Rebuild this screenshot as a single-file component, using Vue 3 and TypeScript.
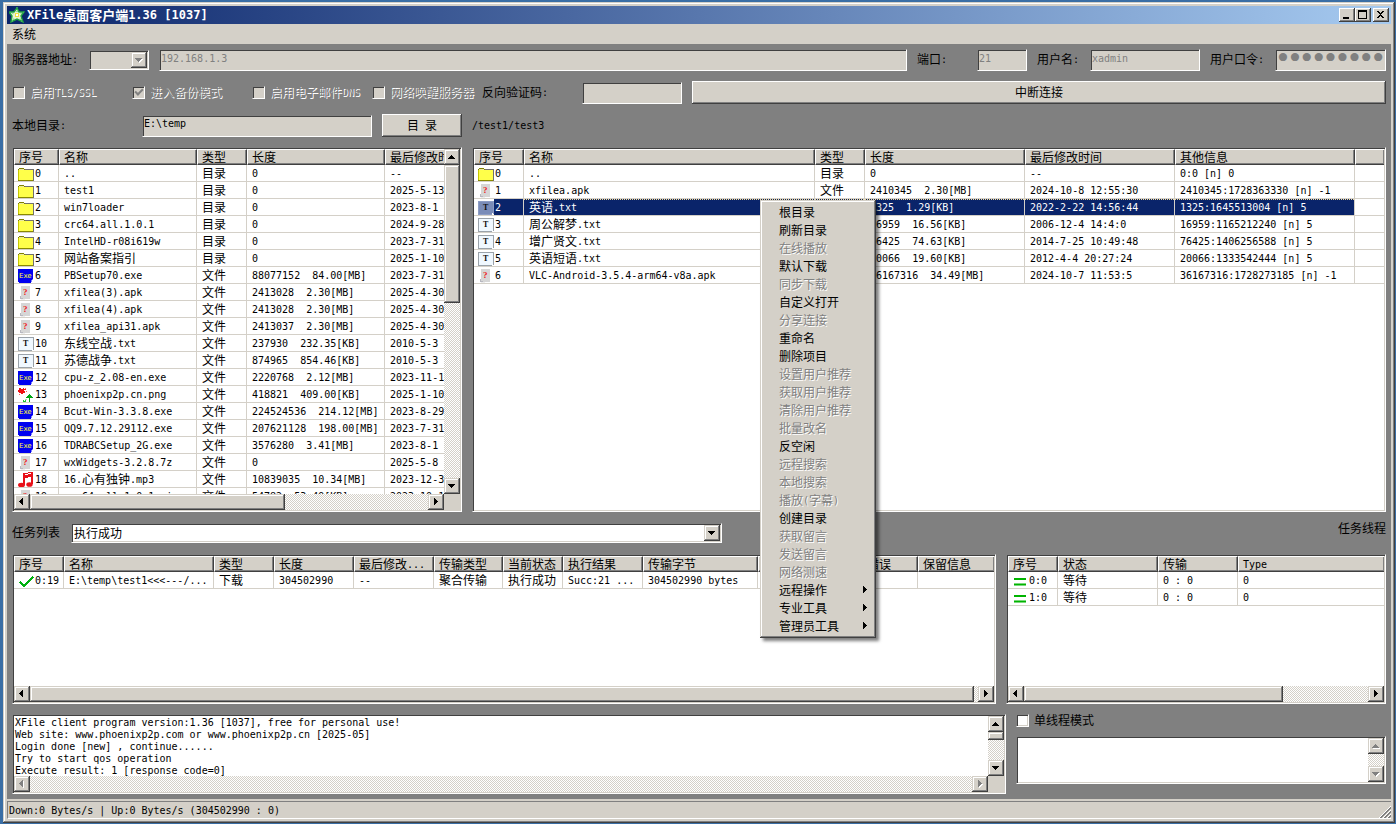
<script setup lang="ts">
import { h, ref, type FunctionalComponent } from 'vue'

type IconKind = 'folder' | 'exe' | 'unknown' | 'text' | 'image' | 'music' | 'check' | 'idle'
interface Column { title: string; width: number }
interface Row { icon: IconKind; cells: string[]; selected?: boolean }
interface MenuEntry { label: string; disabled?: boolean; submenu?: boolean }

/* Half-width and full-width characters take a face each, on one 6px/12px grid. */
const T: FunctionalComponent<{ v: string }> = (props) =>
  h('span', { class: 'txt' }, (props.v.match(/[\u2e80-\uffef]+|[^\u2e80-\uffef]+/g) ?? []).map((run) =>
    /[\u2e80-\uffef]/.test(run) ? h('span', run) : h('span', { class: 'half' }, run)))
T.props = ['v']

const arrows: Record<string, string> = {
  up: 'M7 6h1v1h1v1h1v1h1v1H4V9h1V8h1V7h1z',
  down: 'M4 6h7v1h-1v1H9v1H8v1H7V9H6V8H5V7H4z',
  left: 'M8 4h1v7H8v-1H7V9H6V8H5V7h1V6h1V5h1z',
  right: 'M6 4h1v1h1v1h1v1h1v1H9v1H8v1H7v1H6z',
}
const Arrow: FunctionalComponent<{ dir: string; off?: boolean }> = (props) =>
  h('svg', { class: 'arrow', viewBox: '0 0 16 16', width: 16, height: 16, 'aria-hidden': 'true' }, [
    props.off ? h('path', { d: arrows[props.dir], fill: '#fff', transform: 'translate(1 1)' }) : null,
    h('path', { d: arrows[props.dir], fill: props.off ? '#808080' : '#000' }),
  ])
Arrow.props = { dir: String, off: Boolean } as any

const ScrollBar: FunctionalComponent<{ vertical?: boolean; thumb?: number; rest?: number; off?: boolean }> = (props) =>
  h('div', { class: ['sbar', props.vertical ? 'v' : 'h'] }, [
    h('button', { type: 'button', class: 'sbtn', disabled: props.off, 'aria-label': props.vertical ? '向上' : '向左' },
      h(Arrow, { dir: props.vertical ? 'up' : 'left', off: props.off })),
    h('div', { class: 'track' }, props.thumb ? [
      h('div', { class: 'thumb', style: { flexGrow: props.thumb } }),
      h('div', { style: { flexGrow: props.rest } }),
    ] : []),
    h('button', { type: 'button', class: 'sbtn', disabled: props.off, 'aria-label': props.vertical ? '向下' : '向右' },
      h(Arrow, { dir: props.vertical ? 'down' : 'right', off: props.off })),
  ])
ScrollBar.props = { vertical: Boolean, thumb: Number, rest: Number, off: Boolean }

const px = (d: string, fill: string) => h('path', { d, fill })
const Icon: FunctionalComponent<{ kind: IconKind; on?: boolean }> = (props) => {
  const parts = {
    folder: [
      px('M1 1h5v1h1v1h8v11H0V2h1z', '#808000'), px('M1 3h14v10H1z', '#ffff4a'), px('M1 2h5v1H1z', '#e8e8a0'),
      px('M0 3h1v10H0z', '#c8c800'), px('M7 2h9v1H7zM15 3h1v11h-1z', '#707070'), px('M1 13h14v1H1z', '#8a8a00'),
    ],
    exe: [
      px('M0 0h15v10h-1v2h-1v2H1v-1H0z', '#0000f0'), px('M14 10h1v1h-1v2h-1v-2h1z', '#8080ff'),
      h('text', { x: 1, y: 9, 'font-size': 7, 'font-family': 'DejaVu Sans, sans-serif', fill: '#ffff30' }, 'Exe'),
    ],
    unknown: [
      px('M3 0h9v13H5v-1H3z', '#d6d6d6'), px('M2 10h1v2h2v1H2z', '#b8b8c0'), px('M3 13h4v1H3z', '#eee'),
      h('text', { x: 5, y: 9, 'font-size': 9, 'font-weight': 700, 'font-family': 'Liberation Serif, serif', fill: '#f02020' }, '?'),
    ],
    text: [
      px('M0 0h16v13h-2v1H0z', props.on ? '#8c9cc4' : '#9aa2aa'), px('M1 1h14v11h-1v1H1z', props.on ? '#7a8cb8' : '#f0f8ff'),
      px('M14 12h1v1h-1z', '#fff'),
      h('text', { x: 5, y: 9, 'font-size': 8, 'font-weight': 700, 'font-family': 'Liberation Serif, serif', fill: '#111' }, 'T'),
    ],
    image: [
      px('M1 0h2v1h2V0h1v1h2v1H6v1h1v2H5v1H3V5H1V4H0V2h1z', '#f01010'), px('M7 0h1v1H7zM8 3h1v1H8zM1 6h1v1H1z', '#ff6060'),
      px('M11 6h1v1h1v1h1v1h1v1h-3v6h-1v-6H8V9h1V8h1V7h1z', '#00a414'),
      px('M5 12h1v1h1v-1h1v2H7v1H3v-1h2z', '#20c030'), px('M7 11h2v1H7z', '#b0e0b0'),
    ],
    music: [
      px('M5 0l10-1v12h-2V4L7 5v7H5z', '#e81018'), px('M7 1l6-1v1L7 2z', '#fff'),
      h('ellipse', { cx: 3.5, cy: 12, rx: 3.5, ry: 2.3, fill: '#e81018' }),
      h('ellipse', { cx: 11.5, cy: 11.5, rx: 3.2, ry: 2.3, fill: '#e81018' }),
    ],
    check: [h('path', { d: 'M2 8l4 4 9-9', fill: 'none', stroke: '#00b010', 'stroke-width': 2 })],
    idle: [px('M2 4h12v2H2zM2 10h12v1H2z', '#00b400'), px('M2 9h12v1H2zM2 11h12v1H2z', '#7ad87a')],
  }[props.kind]
  return h('svg', { class: 'ico', viewBox: '0 -2 16 16', width: 16, height: 16, 'aria-hidden': 'true' }, parts)
}
Icon.props = { kind: String, on: Boolean } as any

const ListView: FunctionalComponent<{ cols: Column[]; rows: Row[]; fill?: boolean; label: string }> = (props) =>
  h('div', { class: 'view' }, h('table', {
    class: 'list', 'aria-label': props.label,
    style: { width: props.fill ? '100%' : props.cols.reduce((s, c) => s + c.width, 0) + 'px' },
  }, [
    h('colgroup', [...props.cols.map((c) => h('col', { style: { width: c.width ? c.width + 'px' : 'auto' } }))]),
    h('thead', h('tr', props.cols.map((c) => h('th', { scope: 'col' }, h(T, { v: c.title }))))),
    h('tbody', props.rows.map((r) => h('tr', { class: { sel: r.selected } }, props.cols.map((_, i) =>
      h('td', { class: { first: i === 0 } }, i === 0
        ? h('div', { class: 'lead' }, [h(Icon, { kind: r.icon, on: r.selected }), h(T, { v: r.cells[0] })])
        : h(T, { v: r.cells[i] ?? '' })))))),
  ]))
ListView.props = { cols: Array, rows: Array, fill: Boolean, label: String } as any

const row = (icon: IconKind, ...cells: string[]): Row => ({ icon, cells })

const localCols: Column[] = [
  { title: '序号', width: 45 }, { title: '名称', width: 138 }, { title: '类型', width: 50 },
  { title: '长度', width: 138 }, { title: '最后修改时间', width: 150 },
]
const localRows: Row[] = [
  row('folder', '0', '..', '目录', '0', '--'),
  row('folder', '1', 'test1', '目录', '0', '2025-5-13'),
  row('folder', '2', 'win7loader', '目录', '0', '2023-8-1'),
  row('folder', '3', 'crc64.all.1.0.1', '目录', '0', '2024-9-28'),
  row('folder', '4', 'IntelHD-r08i619w', '目录', '0', '2023-7-31'),
  row('folder', '5', '网站备案指引', '目录', '0', '2025-1-10'),
  row('exe', '6', 'PBSetup70.exe', '文件', '88077152  84.00[MB]', '2023-7-31'),
  row('unknown', '7', 'xfilea(3).apk', '文件', '2413028  2.30[MB]', '2025-4-30'),
  row('unknown', '8', 'xfilea(4).apk', '文件', '2413028  2.30[MB]', '2025-4-30'),
  row('unknown', '9', 'xfilea_api31.apk', '文件', '2413037  2.30[MB]', '2025-4-30'),
  row('text', '10', '东线空战.txt', '文件', '237930  232.35[KB]', '2010-5-3'),
  row('text', '11', '苏德战争.txt', '文件', '874965  854.46[KB]', '2010-5-3'),
  row('exe', '12', 'cpu-z_2.08-en.exe', '文件', '2220768  2.12[MB]', '2023-11-1'),
  row('image', '13', 'phoenixp2p.cn.png', '文件', '418821  409.00[KB]', '2025-1-10'),
  row('exe', '14', 'Bcut-Win-3.3.8.exe', '文件', '224524536  214.12[MB]', '2023-8-29'),
  row('exe', '15', 'QQ9.7.12.29112.exe', '文件', '207621128  198.00[MB]', '2023-7-31'),
  row('exe', '16', 'TDRABCSetup_2G.exe', '文件', '3576280  3.41[MB]', '2023-8-1'),
  row('unknown', '17', 'wxWidgets-3.2.8.7z', '文件', '0', '2025-5-8'),
  row('music', '18', '16.心有独钟.mp3', '文件', '10839035  10.34[MB]', '2023-12-3'),
  row('unknown', '19', 'crc64.all.1.0.1.zip', '文件', '54782  53.49[KB]', '2023-10-1'),
]

const remoteCols: Column[] = [
  { title: '序号', width: 50 }, { title: '名称', width: 291 }, { title: '类型', width: 50 }, { title: '长度', width: 160 },
  { title: '最后修改时间', width: 150 }, { title: '其他信息', width: 180 }, { title: '', width: 0 },
]
const remoteRows: Row[] = [
  row('folder', '0', '..', '目录', '0', '--', '0:0 [n] 0'),
  row('unknown', '1', 'xfilea.apk', '文件', '2410345  2.30[MB]', '2024-10-8 12:55:30', '2410345:1728363330 [n] -1'),
  { ...row('text', '2', '英语.txt', '文件', '1325  1.29[KB]', '2022-2-22 14:56:44', '1325:1645513004 [n] 5'), selected: true },
  row('text', '3', '周公解梦.txt', '文件', '16959  16.56[KB]', '2006-12-4 14:4:0', '16959:1165212240 [n] 5'),
  row('text', '4', '增广贤文.txt', '文件', '76425  74.63[KB]', '2014-7-25 10:49:48', '76425:1406256588 [n] 5'),
  row('text', '5', '英语短语.txt', '文件', '20066  19.60[KB]', '2012-4-4 20:27:24', '20066:1333542444 [n] 5'),
  row('unknown', '6', 'VLC-Android-3.5.4-arm64-v8a.apk', '文件', '36167316  34.49[MB]', '2024-10-7 11:53:5', '36167316:1728273185 [n] -1'),
]

const taskCols: Column[] = [
  { title: '序号', width: 50 }, { title: '名称', width: 150 }, { title: '类型', width: 60 }, { title: '长度', width: 80 },
  { title: '最后修改...', width: 80 }, { title: '传输类型', width: 69 }, { title: '当前状态', width: 60 },
  { title: '执行结果', width: 80 }, { title: '传输字节', width: 115 }, { title: '', width: 80 },
  { title: '传输错误', width: 80 }, { title: '保留信息', width: 0 },
]
const taskRows: Row[] = [
  row('check', '0:19', 'E:\\temp\\test1<<<---/...', '下载', '304502990', '--', '聚合传输', '执行成功', 'Succ:21 ...', '304502990 bytes'),
]

const threadCols: Column[] = [
  { title: '序号', width: 50 }, { title: '状态', width: 100 }, { title: '传输', width: 80 }, { title: 'Type', width: 0 },
]
const threadRows: Row[] = [row('idle', '0:0', '等待', '0 : 0', '0'), row('idle', '1:0', '等待', '0 : 0', '0')]

const on = (label: string): MenuEntry => ({ label })
const off = (label: string): MenuEntry => ({ label, disabled: true })
const sub = (label: string): MenuEntry => ({ label, submenu: true })
const menu: MenuEntry[] = [
  on('根目录'), on('刷新目录'), off('在线播放'), on('默认下载'), off('同步下载'), on('自定义打开'), off('分享连接'),
  on('重命名'), on('删除项目'), off('设置用户推荐'), off('获取用户推荐'), off('清除用户推荐'), off('批量改名'),
  on('反空闲'), off('远程搜索'), off('本地搜索'), off('播放(字幕)'), on('创建目录'), off('获取留言'), off('发送留言'),
  off('网络测速'), sub('远程操作'), sub('专业工具'), sub('管理员工具'),
]

const options = [
  { id: 'tls', label: '启用TLS/SSL', checked: false },
  { id: 'backup', label: '进入备份模式', checked: true },
  { id: 'dns', label: '启用电子邮件DNS', checked: false },
  { id: 'wake', label: '网络唤醒服务器', checked: false },
]

const log = [
  'XFile client program version:1.36 [1037], free for personal use!',
  'Web site: www.phoenixp2p.com or www.phoenixp2p.cn [2025-05]',
  'Login done [new] , continue......',
  'Try to start qos operation',
  'Execute result: 1 [response code=0]',
].join('\n')
const localDir = ref('E:\\temp')
const single = ref(false)
</script>

<template>
  <div class="desktop">
    <div class="window">
      <header class="title">
        <svg class="logo" viewBox="0 0 16 16" width="16" height="16" aria-hidden="true">
          <path d="M8 1l2 4 5 0-3 4 2 6-6-3-6 3 1-6-3-4 5 0z" fill="#e8f4d0" stroke="#1fa040" stroke-width="1.4" />
          <path d="M8 0v5M15 5l-4 2M13 15l-2-4M3 15l2-4M1 5l4 2" stroke="#48c068" stroke-width="1" stroke-dasharray="1 1" />
          <path d="M6 6h4v4H6z" fill="#f0e040" /><path d="M7 7h2v2H7z" fill="#fff" />
        </svg>
        <h1><T v="XFile桌面客户端1.36 [1037]" /></h1>
        <div class="caption-buttons">
          <button type="button" class="cap" aria-label="最小化"><svg viewBox="0 0 16 14" width="16" height="14"><path d="M4 9h6v2H4z" /></svg></button>
          <button type="button" class="cap" aria-label="最大化"><svg viewBox="0 0 16 14" width="16" height="14"><path d="M3 2h9v9H3zM4 4v6h7V4z" fill-rule="evenodd" /></svg></button>
          <button type="button" class="cap close" aria-label="关闭"><svg viewBox="0 0 16 14" width="16" height="14"><path d="M4 3h2v1h1v1h1V4h1V3h2v1h-1v1H9v1H8v1h1v1h1v1h1v1H9V9H8V8H7v1H6v1H4V9h1V8h1V7h1V6H6V5H5V4H4z" /></svg></button>
        </div>
      </header>
      <nav class="menubar"><button type="button">系统</button></nav>

      <main class="body">
        <div class="line">
          <div class="field"><label for="proto" class="w77"><T v="服务器地址:" /></label>
            <div class="combo proto"><select id="proto" disabled><option></option></select><span class="drop"><Arrow dir="down" off /></span></div>
          </div>
          <input class="box grow" aria-label="服务器地址" value="192.168.1.3" disabled>
          <div class="field"><label for="port" class="w60"><T v="端口:" /></label><input id="port" class="box w50" value="21" disabled></div>
          <div class="field"><label for="user" class="w53"><T v="用户名:" /></label><input id="user" class="box w110" value="xadmin" disabled></div>
          <div class="field"><label for="pass" class="w65"><T v="用户口令:" /></label><input id="pass" class="box w111 pass" type="password" value="0000000000" disabled></div>
        </div>

        <div class="line second">
          <div class="options">
            <div v-for="o in options" :key="o.id" class="option">
              <input :id="o.id" type="checkbox" :checked="o.checked" disabled><label :for="o.id"><T :v="o.label" /></label>
            </div>
          </div>
          <div class="field"><label for="code" class="w100"><T v="反向验证码:" /></label><input id="code" class="box w100" disabled></div>
          <button type="button" class="push grow">中断连接</button>
        </div>

        <div class="line second">
          <div class="field"><label for="dir" class="w130"><T v="本地目录:" /></label><input id="dir" v-model="localDir" class="box w230 live"></div>
          <button type="button" class="push w80"><T v="目 录" /></button>
          <div class="path"><T v="/test1/test3" /></div>
        </div>

        <div class="files">
          <section class="sunken local">
            <ListView :cols="localCols" :rows="localRows" label="本地目录" />
            <ScrollBar vertical :thumb="138" :rest="175" />
            <ScrollBar :thumb="255" :rest="143" />
            <div class="corner"></div>
          </section>
          <div class="remote">
            <section class="sunken">
              <ListView :cols="remoteCols" :rows="remoteRows" fill label="远程目录" />
            </section>
            <ul class="popup" role="menu">
              <li v-for="m in menu" :key="m.label" role="none">
                <button type="button" role="menuitem" :disabled="m.disabled"><T :v="m.label" /><Arrow v-if="m.submenu" dir="right" /></button>
              </li>
            </ul>
          </div>
        </div>

        <div class="line tasks-line">
          <div class="field"><label for="task" class="w59">任务列表</label>
            <div class="combo task"><select id="task"><option>执行成功</option></select><span class="drop"><Arrow dir="down" /></span></div>
          </div>
          <span class="threads-title">任务线程</span>
        </div>

        <div class="tasks">
          <section class="sunken stack">
            <ListView :cols="taskCols" :rows="taskRows" fill label="任务列表" />
            <ScrollBar :thumb="944" :rest="4" />
          </section>
          <section class="sunken stack threads">
            <ListView :cols="threadCols" :rows="threadRows" fill label="任务线程" />
            <ScrollBar :thumb="259" :rest="85" />
          </section>
        </div>

        <div class="bottom">
          <div class="sunken log">
            <textarea aria-label="日志" readonly :value="log" wrap="off"></textarea>
            <ScrollBar vertical :thumb="8" :rest="20" />
            <ScrollBar off />
            <div class="corner"></div>
          </div>
          <div class="side">
            <div class="option live"><input id="single" v-model="single" type="checkbox"><label for="single">单线程模式</label></div>
            <div class="sunken note">
              <textarea aria-label="备注"></textarea>
              <ScrollBar vertical off />
            </div>
          </div>
        </div>
      </main>

      <footer class="status">
        <T v="Down:0 Bytes/s | Up:0 Bytes/s (304502990 : 0)" />
        <svg viewBox="0 0 12 12" width="12" height="12" aria-hidden="true">
          <path d="M0 12L12 0M4 12l8-8M8 12l4-4" stroke="#fff" />
          <path d="M1 12L12 1M2 12L12 2M5 12l7-7M6 12l6-6M9 12l3-3M10 12l2-2" stroke="#808080" />
        </svg>
      </footer>
    </div>
  </div>
</template>

<style>
body { margin: 0; background: #3a6ea5; }
.txt { white-space: pre; }
.half { font-family: "DejaVu Sans Mono", "Liberation Mono", monospace; font-size: 10px; line-height: 0; vertical-align: 1px; }
.arrow { display: block; flex: none; shape-rendering: crispEdges; }
.ico { display: block; flex: none; overflow: visible; }
.ico path { shape-rendering: crispEdges; }

.sbar { display: flex; background: repeating-conic-gradient(#fff 0 25%, #d4d0c8 0 50%) 0 0 / 2px 2px; }
.sbar.v { flex-direction: column; width: 16px; }
.sbar.h { height: 16px; }
.sbtn, .thumb {
  background: #d4d0c8;
  box-shadow: inset -1px -1px #404040, inset 1px 1px #d4d0c8, inset -2px -2px #808080, inset 2px 2px #fff;
}
.sbtn { display: block; flex: none; width: 16px; height: 16px; padding: 0; border: 0; }
.track { display: flex; flex: 1; min-width: 0; min-height: 0; }
.track > div { flex-basis: 0; }
.sbar.v .track { flex-direction: column; }

.view { overflow: hidden; background: #fff; min-width: 0; min-height: 0; }
.list { table-layout: fixed; border-collapse: separate; border-spacing: 0; }
.list th, .list td { box-sizing: border-box; padding: 0 0 0 5px; overflow: hidden; white-space: pre; text-align: left; font-weight: 400; }
.list th {
  height: 16px; line-height: 14px; padding-left: 4px; background: #d4d0c8;
  border: solid; border-width: 1px; border-color: #fff #404040 #404040 #fff; box-shadow: inset -1px -1px #808080;
}
.list th:last-child { border-right: 0; }
.list td { height: 17px; line-height: 16px; border-right: 1px solid #d4d0c8; border-bottom: 1px solid #d4d0c8; }
.list td:last-child { border-right: 0; }
.list td.first { padding-left: 4px; }
.lead { display: flex; gap: 1px; height: 16px; }
.list tr.sel td:not(:last-child) {
  color: #fff;
  background: repeating-linear-gradient(90deg, #f5db95 0 1px, #0a246a 1px 2px) 0 0 / 100% 1px no-repeat, #0a246a;
}
.list tr.sel td.first { background: linear-gradient(90deg, #fff 20px, #0a246a 20px); }
</style>

<style scoped>
.desktop { box-sizing: border-box; display: flex; height: 100vh; padding: 2px 1px 1px 3px; background: #3a6ea5; font: 12px/16px "Noto Sans CJK SC", sans-serif; color: #000; }
.window {
  box-sizing: border-box; display: flex; flex-direction: column; flex: 1; min-width: 0; padding: 4px; background: #d4d0c8;
  box-shadow: inset -1px -1px #404040, inset 1px 1px #d4d0c8, inset -2px -2px #808080, inset 2px 2px #fff;
}
button, input, select, textarea { font: inherit; color: inherit; margin: 0; }
.title { display: flex; align-items: center; flex: none; height: 18px; padding: 0 2px; gap: 2px; background: linear-gradient(90deg, #0a246a, #a6caf0); color: #fff; }
.title h1 { flex: 1; margin: 0; font-size: 13px; line-height: 18px; font-weight: 700; }
.title h1 :deep(.half) { font-size: 12px; }
.logo { display: block; }
.caption-buttons { display: flex; }
.cap { width: 16px; height: 14px; padding: 0; border: 0; background: #d4d0c8; box-shadow: inset -1px -1px #404040, inset 1px 1px #fff, inset -2px -2px #808080; }
.cap svg { display: block; shape-rendering: crispEdges; }
.close { margin-left: 2px; }
.menubar { flex: none; height: 20px; }
.menubar button { height: 20px; padding: 0 5px; border: 0; background: none; line-height: 20px; }

.body { display: flex; flex-direction: column; flex: 1; min-height: 0; gap: 10px; padding: 5px; background: #808080; }
.line { display: flex; align-items: center; flex: none; gap: 10px; height: 22px; }
.second { height: 23px; }
.field { display: flex; align-items: center; flex: none; }
.field label, .path, .option label { padding-bottom: 2px; }
.grow { flex: 1; min-width: 0; }
.box, .combo, .sunken { box-sizing: border-box; border: 1px solid; border-color: #808080 #fff #fff #808080; box-shadow: inset 1px 1px #404040, inset -1px -1px #d4d0c8; }
.box { height: 22px; padding: 0 1px 4px; border-radius: 0; background: #d4d0c8; color: #000; font: 10px/16px "DejaVu Sans Mono", "Liberation Mono", monospace; outline: 0; }
.box:disabled { color: #808080; }
.pass { font-family: "Liberation Serif", serif; font-size: 34px; }
.combo { display: grid; height: 20px; padding: 1px; background: #d4d0c8; }
.combo select { grid-area: 1 / 1; appearance: none; min-width: 0; padding: 0 1px; border: 0; border-radius: 0; background: none; opacity: 1; line-height: 16px; outline: 0; }
.drop { grid-area: 1 / 1; justify-self: end; width: 16px; height: 16px; background: #d4d0c8; pointer-events: none; box-shadow: inset -1px -1px #404040, inset 1px 1px #d4d0c8, inset -2px -2px #808080, inset 2px 2px #fff; }
.proto { width: 60px; }
.task { width: 651px; background: #fff; }
.w50 { width: 50px; } .w53 { width: 53px; } .w59 { width: 59px; } .w60 { width: 60px; } .w65 { width: 65px; } .w77 { width: 77px; }
.w80 { width: 80px; } .w100 { width: 100px; } .w110 { width: 110px; } .w111 { width: 111px; } .w130 { width: 130px; } .w230 { width: 230px; }
.options { display: grid; grid-template-columns: 120px 120px 120px 100px; }
.option { display: flex; align-items: center; gap: 5px; height: 13px; white-space: nowrap; color: #808080; text-shadow: 1px 1px #fff; }
.option input { appearance: none; box-sizing: border-box; flex: none; width: 13px; height: 13px; border: 1px solid; border-color: #808080 #fff #fff #808080; box-shadow: inset 1px 1px #404040, inset -1px -1px #d4d0c8; background: #d4d0c8; }
.option input:checked { display: grid; place-items: center; }
.option input:checked::after { content: ""; width: 6px; height: 3px; border: solid #808080; border-width: 0 0 2px 2px; transform: rotate(-45deg) translate(1px, -1px); }
.option.live { color: #000; text-shadow: none; }
.option.live input { background: #fff; }
.push { box-sizing: border-box; height: 23px; padding: 0 0 2px; border: 0; background: #d4d0c8; box-shadow: inset -1px -1px #404040, inset 1px 1px #fff, inset -2px -2px #808080; }

.files { display: flex; flex: 365 1 0; min-height: 0; gap: 10px; }
.sunken { padding: 1px; background: #fff; min-width: 0; min-height: 0; }
.local { display: grid; flex: none; width: 450px; grid-template: minmax(0, 1fr) 16px / minmax(0, 1fr) 16px; }
.remote { position: relative; display: grid; flex: 1; min-width: 0; }
.corner { background: #d4d0c8; }
.popup {
  position: absolute; left: 288px; top: 53px; z-index: 2; box-sizing: border-box; width: 116px; margin: 0; padding: 3px; list-style: none; background: #d4d0c8;
  box-shadow: inset -1px -1px #404040, inset 1px 1px #d4d0c8, inset -2px -2px #808080, inset 2px 2px #fff, 3px 3px 3px rgba(0, 0, 0, .5);
}
.popup button { display: flex; align-items: center; justify-content: space-between; width: 100%; height: 18px; padding: 0 0 0 16px; border: 0; background: none; line-height: 18px; text-align: left; }
.popup button:disabled { color: #808080; text-shadow: 1px 1px #fff; }

.tasks-line { justify-content: space-between; }
.threads-title { align-self: flex-start; line-height: 12px; }
.tasks { display: grid; grid-template-columns: minmax(0, 1fr) 380px; flex: 150 1 0; min-height: 0; gap: 10px; }
.stack { display: grid; grid-template-rows: minmax(0, 1fr) 16px; }
.bottom { display: grid; grid-template-columns: minmax(0, 1fr) 370px; flex: 80 1 0; min-height: 0; gap: 10px; }
.log { display: grid; grid-template: minmax(0, 1fr) 16px / minmax(0, 1fr) 16px; }
textarea { box-sizing: border-box; min-width: 0; min-height: 0; padding: 1px 1px 0; border: 0; background: #fff; resize: none; overflow: hidden; outline: 0; font: 10px/12px "DejaVu Sans Mono", "Liberation Mono", monospace; }
.side { display: flex; flex-direction: column; justify-content: space-between; padding-bottom: 10px; }
.note { display: grid; grid-template-columns: minmax(0, 1fr) 16px; height: 48px; }

.status { display: flex; align-items: center; justify-content: space-between; flex: none; box-sizing: border-box; height: 18px; margin-top: 2px; padding-left: 1px; border: solid; border-width: 1px 0 1px 1px; border-color: #808080 #fff #fff #808080; }
.status svg { align-self: flex-end; display: block; }
</style>
